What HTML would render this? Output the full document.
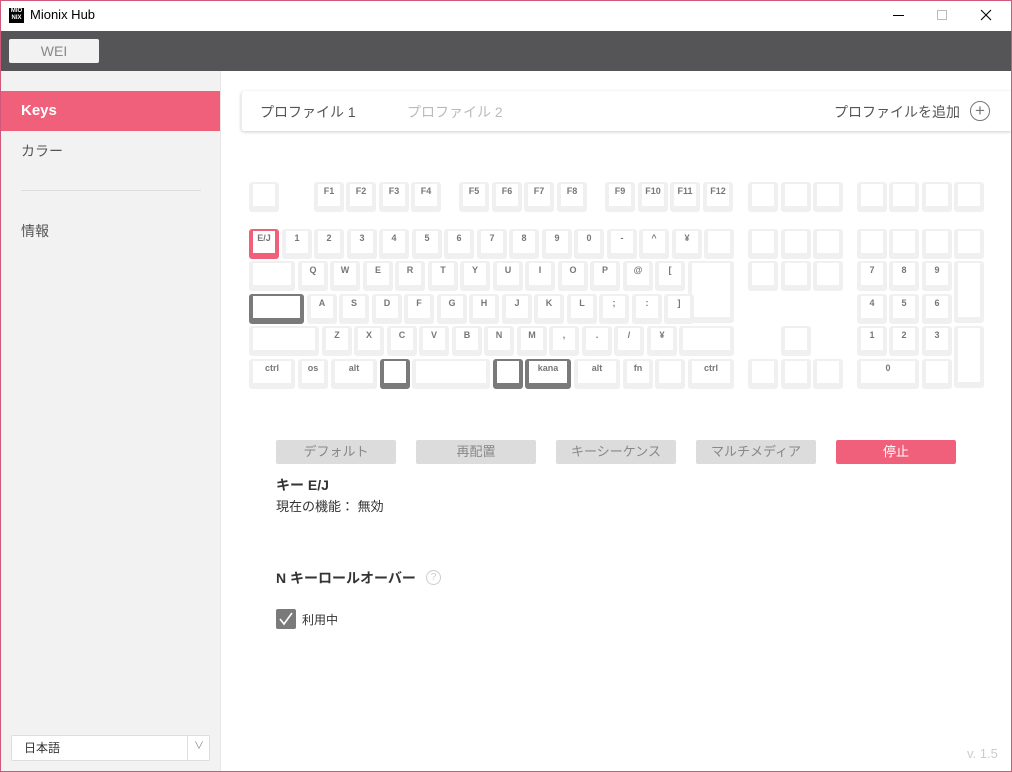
<!DOCTYPE html>
<html><head><meta charset="utf-8"><style>
*{margin:0;padding:0;box-sizing:border-box}
body{width:1012px;height:772px;overflow:hidden;background:#fff;font-family:"Liberation Sans","Noto Sans CJK JP",sans-serif;position:relative}
.win{position:absolute;inset:0;border:1px solid #d0587a}
.k{position:absolute;height:30px;background:#fff;border:solid #f0f0f0;border-width:2px 4px 6px 4px;border-radius:3px;font-weight:bold;font-size:9px;color:#777;text-align:center;line-height:10px;padding-top:2px;font-family:"Liberation Sans","DejaVu Sans",sans-serif}
.r{border-color:#f0607a}
.g{border-color:#7a7a7a}
.btn{position:absolute;top:440px;width:120px;height:24px;background:#dcdcdc;border-radius:2px;color:#888;font-size:13px;text-align:center;line-height:24px}
</style></head><body>
<div style="position:absolute;left:0;top:0;width:1012px;height:31px;background:#fff"></div>
<div style="position:absolute;left:9px;top:8px;width:15px;height:15px;background:#000;color:#fff;font-size:6px;line-height:7px;text-align:center;font-weight:bold">MIO<br>NIX</div>
<div style="position:absolute;left:30px;top:7px;font-size:13px;color:#000">Mionix Hub</div>
<svg style="position:absolute;left:880px;top:0" width="132" height="31"><path d="M13 15.5H24" stroke="#000" stroke-width="1"/><rect x="57.5" y="10.5" width="9" height="9" fill="none" stroke="#bbb"/><path d="M101 10L111 20M111 10L101 20" stroke="#000" stroke-width="1.1"/></svg>
<div style="position:absolute;left:0;top:31px;width:1012px;height:40px;background:#555557"></div>
<div style="position:absolute;left:9px;top:39px;width:90px;height:24px;background:#f2f2f2;border-radius:2px;color:#888;font-size:14px;text-align:center;line-height:24px">WEI</div>
<div style="position:absolute;left:0;top:71px;width:221px;height:701px;background:#f2f2f2;border-right:1px solid #e6e6e6"></div>
<div style="position:absolute;left:0;top:91px;width:220px;height:40px;background:#f0607a;color:#fff;font-weight:bold;font-size:15px;line-height:40px;padding-left:21px">Keys</div>
<div style="position:absolute;left:21px;top:141px;font-size:14px;color:#555">カラー</div>
<div style="position:absolute;left:21px;top:190px;width:180px;height:1px;background:#ddd"></div>
<div style="position:absolute;left:21px;top:221px;font-size:14px;color:#555">情報</div>
<div style="position:absolute;left:11px;top:735px;width:199px;height:26px;background:#fff;border:1px solid #ddd;border-radius:2px;font-size:12px;color:#333;line-height:24px;padding-left:12px">日本語<span style="position:absolute;left:175px;top:0;width:1px;height:24px;background:#ddd"></span><span style="position:absolute;left:182px;top:-1px;color:#888;font-size:10px">∨</span></div>
<div style="position:absolute;left:241px;top:91px;width:770px;height:40px;background:#fff;box-shadow:0 1px 3px rgba(0,0,0,.2);border-radius:3px 0 0 3px;border-left:1px solid #eee"></div>
<div style="position:absolute;left:260px;top:102px;font-size:14px;color:#555">プロファイル 1</div>
<div style="position:absolute;left:407px;top:102px;font-size:14px;color:#bbb">プロファイル 2</div>
<div style="position:absolute;left:834px;top:102px;font-size:14px;color:#555">プロファイルを追加</div>
<div style="position:absolute;left:970px;top:101px;width:20px;height:20px;border:1px solid #777;border-radius:50%;color:#777;font-size:17px;line-height:17px;text-align:center">+</div>

<div class="k" style="left:249px;top:182px;width:30px"></div>
<div class="k" style="left:314px;top:182px;width:30px">F1</div>
<div class="k" style="left:346px;top:182px;width:30px">F2</div>
<div class="k" style="left:379px;top:182px;width:30px">F3</div>
<div class="k" style="left:411px;top:182px;width:30px">F4</div>
<div class="k" style="left:459px;top:182px;width:30px">F5</div>
<div class="k" style="left:492px;top:182px;width:30px">F6</div>
<div class="k" style="left:524px;top:182px;width:30px">F7</div>
<div class="k" style="left:557px;top:182px;width:30px">F8</div>
<div class="k" style="left:605px;top:182px;width:30px">F9</div>
<div class="k" style="left:638px;top:182px;width:30px">F10</div>
<div class="k" style="left:670px;top:182px;width:30px">F11</div>
<div class="k" style="left:703px;top:182px;width:30px">F12</div>
<div class="k" style="left:748px;top:182px;width:30px"></div>
<div class="k" style="left:781px;top:182px;width:30px"></div>
<div class="k" style="left:813px;top:182px;width:30px"></div>
<div class="k" style="left:857px;top:182px;width:30px"></div>
<div class="k" style="left:889px;top:182px;width:30px"></div>
<div class="k" style="left:922px;top:182px;width:30px"></div>
<div class="k" style="left:954px;top:182px;width:30px"></div>
<div class="k r" style="left:249px;top:229px;width:30px">E/J</div>
<div class="k" style="left:282px;top:229px;width:30px">1</div>
<div class="k" style="left:314px;top:229px;width:30px">2</div>
<div class="k" style="left:347px;top:229px;width:30px">3</div>
<div class="k" style="left:379px;top:229px;width:30px">4</div>
<div class="k" style="left:412px;top:229px;width:30px">5</div>
<div class="k" style="left:444px;top:229px;width:30px">6</div>
<div class="k" style="left:477px;top:229px;width:30px">7</div>
<div class="k" style="left:509px;top:229px;width:30px">8</div>
<div class="k" style="left:542px;top:229px;width:30px">9</div>
<div class="k" style="left:574px;top:229px;width:30px">0</div>
<div class="k" style="left:607px;top:229px;width:30px">-</div>
<div class="k" style="left:639px;top:229px;width:30px">^</div>
<div class="k" style="left:672px;top:229px;width:30px">¥</div>
<div class="k" style="left:704px;top:229px;width:30px"></div>
<div class="k" style="left:748px;top:229px;width:30px"></div>
<div class="k" style="left:781px;top:229px;width:30px"></div>
<div class="k" style="left:813px;top:229px;width:30px"></div>
<div class="k" style="left:857px;top:229px;width:30px"></div>
<div class="k" style="left:889px;top:229px;width:30px"></div>
<div class="k" style="left:922px;top:229px;width:30px"></div>
<div class="k" style="left:954px;top:229px;width:30px"></div>
<div class="k" style="left:249px;top:261px;width:46px"></div>
<div class="k" style="left:298px;top:261px;width:30px">Q</div>
<div class="k" style="left:330px;top:261px;width:30px">W</div>
<div class="k" style="left:363px;top:261px;width:30px">E</div>
<div class="k" style="left:395px;top:261px;width:30px">R</div>
<div class="k" style="left:428px;top:261px;width:30px">T</div>
<div class="k" style="left:460px;top:261px;width:30px">Y</div>
<div class="k" style="left:493px;top:261px;width:30px">U</div>
<div class="k" style="left:525px;top:261px;width:30px">I</div>
<div class="k" style="left:558px;top:261px;width:30px">O</div>
<div class="k" style="left:590px;top:261px;width:30px">P</div>
<div class="k" style="left:623px;top:261px;width:30px">@</div>
<div class="k" style="left:655px;top:261px;width:30px">[</div>
<div class="k" style="left:688px;top:261px;width:46px;height:62px"></div>
<div class="k" style="left:748px;top:261px;width:30px"></div>
<div class="k" style="left:781px;top:261px;width:30px"></div>
<div class="k" style="left:813px;top:261px;width:30px"></div>
<div class="k" style="left:857px;top:261px;width:30px">7</div>
<div class="k" style="left:889px;top:261px;width:30px">8</div>
<div class="k" style="left:922px;top:261px;width:30px">9</div>
<div class="k" style="left:954px;top:261px;width:30px;height:62px"></div>
<div class="k g" style="left:249px;top:294px;width:55px"></div>
<div class="k" style="left:307px;top:294px;width:30px">A</div>
<div class="k" style="left:339px;top:294px;width:30px">S</div>
<div class="k" style="left:372px;top:294px;width:30px">D</div>
<div class="k" style="left:404px;top:294px;width:30px">F</div>
<div class="k" style="left:437px;top:294px;width:30px">G</div>
<div class="k" style="left:469px;top:294px;width:30px">H</div>
<div class="k" style="left:502px;top:294px;width:30px">J</div>
<div class="k" style="left:534px;top:294px;width:30px">K</div>
<div class="k" style="left:567px;top:294px;width:30px">L</div>
<div class="k" style="left:599px;top:294px;width:30px">;</div>
<div class="k" style="left:632px;top:294px;width:30px">:</div>
<div class="k" style="left:664px;top:294px;width:30px">]</div>
<div class="k" style="left:857px;top:294px;width:30px">4</div>
<div class="k" style="left:889px;top:294px;width:30px">5</div>
<div class="k" style="left:922px;top:294px;width:30px">6</div>
<div class="k" style="left:249px;top:326px;width:70px"></div>
<div class="k" style="left:322px;top:326px;width:30px">Z</div>
<div class="k" style="left:354px;top:326px;width:30px">X</div>
<div class="k" style="left:387px;top:326px;width:30px">C</div>
<div class="k" style="left:419px;top:326px;width:30px">V</div>
<div class="k" style="left:452px;top:326px;width:30px">B</div>
<div class="k" style="left:484px;top:326px;width:30px">N</div>
<div class="k" style="left:517px;top:326px;width:30px">M</div>
<div class="k" style="left:549px;top:326px;width:30px">,</div>
<div class="k" style="left:582px;top:326px;width:30px">.</div>
<div class="k" style="left:614px;top:326px;width:30px">/</div>
<div class="k" style="left:647px;top:326px;width:30px">¥</div>
<div class="k" style="left:679px;top:326px;width:55px"></div>
<div class="k" style="left:781px;top:326px;width:30px"></div>
<div class="k" style="left:857px;top:326px;width:30px">1</div>
<div class="k" style="left:889px;top:326px;width:30px">2</div>
<div class="k" style="left:922px;top:326px;width:30px">3</div>
<div class="k" style="left:954px;top:326px;width:30px;height:62px"></div>
<div class="k" style="left:249px;top:359px;width:46px">ctrl</div>
<div class="k" style="left:298px;top:359px;width:30px">os</div>
<div class="k" style="left:331px;top:359px;width:46px">alt</div>
<div class="k g" style="left:380px;top:359px;width:30px"></div>
<div class="k" style="left:412px;top:359px;width:78px"></div>
<div class="k g" style="left:493px;top:359px;width:30px"></div>
<div class="k g" style="left:525px;top:359px;width:46px">kana</div>
<div class="k" style="left:574px;top:359px;width:46px">alt</div>
<div class="k" style="left:623px;top:359px;width:30px">fn</div>
<div class="k" style="left:655px;top:359px;width:30px"></div>
<div class="k" style="left:688px;top:359px;width:46px">ctrl</div>
<div class="k" style="left:748px;top:359px;width:30px"></div>
<div class="k" style="left:781px;top:359px;width:30px"></div>
<div class="k" style="left:813px;top:359px;width:30px"></div>
<div class="k" style="left:857px;top:359px;width:62px">0</div>
<div class="k" style="left:922px;top:359px;width:30px"></div>

<div class="btn" style="left:276px">デフォルト</div>
<div class="btn" style="left:416px">再配置</div>
<div class="btn" style="left:556px">キーシーケンス</div>
<div class="btn" style="left:696px">マルチメディア</div>
<div class="btn" style="left:836px;background:#f0607a;color:#fff">停止</div>
<div style="position:absolute;left:276px;top:475px;font-size:14px;font-weight:bold;color:#333">キー E/J</div>
<div style="position:absolute;left:276px;top:496px;font-size:13px;color:#333">現在の機能： 無効</div>
<div style="position:absolute;left:276px;top:568px;font-size:14px;font-weight:bold;color:#333">N キーロールオーバー</div>
<div style="position:absolute;left:426px;top:570px;width:15px;height:15px;border:1px solid #ccc;border-radius:50%;color:#ccc;font-size:10px;line-height:13px;text-align:center">?</div>
<div style="position:absolute;left:276px;top:609px;width:20px;height:20px;background:#7a7a7a;border-radius:2px"><svg width="20" height="20"><path d="M4 10 L8 15 L16 4" stroke="#fff" stroke-width="1.6" fill="none"/></svg></div>
<div style="position:absolute;left:302px;top:611px;font-size:12px;color:#333">利用中</div>
<div style="position:absolute;left:967px;top:746px;font-size:13px;color:#ccc">v. 1.5</div>
<div class="win"></div>
</body></html>
